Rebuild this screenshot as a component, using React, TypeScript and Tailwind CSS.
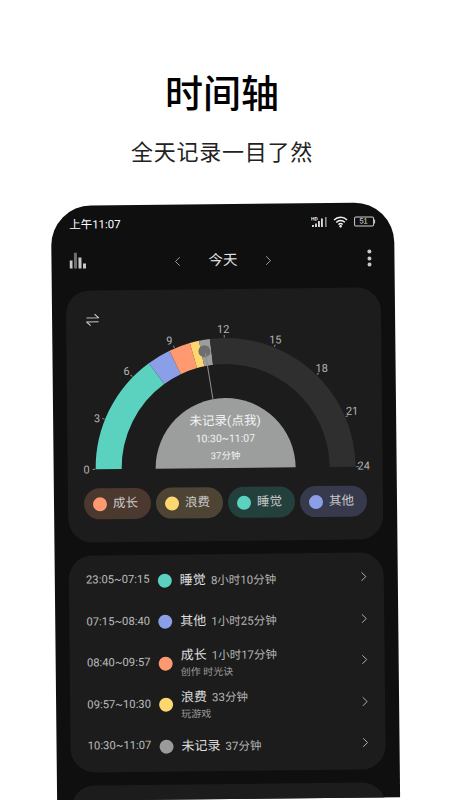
import { ChevronLeft, ChevronRight } from "lucide-react";

const cx = 158;
const cy = 179;

function point(hour: number, r: number) {
  const a = Math.PI - (hour / 24) * Math.PI;
  return [cx + r * Math.cos(a), cy - r * Math.sin(a)];
}

function arc(from: number, to: number) {
  const R = 130;
  const r = 104;
  const [x1, y1] = point(from, R);
  const [x2, y2] = point(to, R);
  const [x3, y3] = point(to, r);
  const [x4, y4] = point(from, r);
  return `M${x1} ${y1}A${R} ${R} 0 0 1 ${x2} ${y2}L${x3} ${y3}A${r} ${r} 0 0 0 ${x4} ${y4}Z`;
}

const segments = [
  { from: 0, to: 7.25, color: "#5bd2c0" },
  { from: 7.25, to: 8.67, color: "#8b9fe8" },
  { from: 8.67, to: 9.95, color: "#ff9a70" },
  { from: 9.95, to: 10.5, color: "#ffd771" },
  { from: 10.5, to: 11.15, color: "#9c9e9d" },
  { from: 11.15, to: 24, color: "#2f2f2f" },
];

const labels = [
  { h: 0, t: "0", x: 19, y: 183 },
  { h: 3, t: "3", x: 30, y: 132 },
  { h: 6, t: "6", x: 60, y: 85 },
  { h: 9, t: "9", x: 103, y: 55 },
  { h: 12, t: "12", x: 157, y: 44 },
  { h: 15, t: "15", x: 209, y: 55 },
  { h: 18, t: "18", x: 255, y: 84 },
  { h: 21, t: "21", x: 285, y: 127 },
  { h: 24, t: "24", x: 296, y: 182 },
];

const pills = [
  { name: "成长", dot: "bg-[#ff9a70]", bg: "bg-[#4b382f]" },
  { name: "浪费", dot: "bg-[#ffd771]", bg: "bg-[#4e4434]" },
  { name: "睡觉", dot: "bg-[#5bd2c0]", bg: "bg-[#24403c]" },
  { name: "其他", dot: "bg-[#8b9fe8]", bg: "bg-[#363a4c]" },
];

const rows = [
  { time: "23:05~07:15", dot: "bg-[#5bd2c0]", name: "睡觉", len: "8小时10分钟", sub: "" },
  { time: "07:15~08:40", dot: "bg-[#8b9fe8]", name: "其他", len: "1小时25分钟", sub: "" },
  { time: "08:40~09:57", dot: "bg-[#ff9a70]", name: "成长", len: "1小时17分钟", sub: "创作 时光诀" },
  { time: "09:57~10:30", dot: "bg-[#ffd771]", name: "浪费", len: "33分钟", sub: "玩游戏" },
  { time: "10:30~11:07", dot: "bg-[#9a9a9a]", name: "未记录", len: "37分钟", sub: "" },
];

function Gauge() {
  return (
    <svg width="315" height="190" viewBox="0 0 315 190" className="block">
      {segments.map((s) => (
        <path key={s.from} d={arc(s.from, s.to)} fill={s.color} />
      ))}
      {labels.map((l) => {
        const [x1, y1] = point(l.h, 130.5);
        const [x2, y2] = point(l.h, 133);
        return (
          <g key={l.t}>
            <line x1={x1} y1={y1} x2={x2} y2={y2} stroke="#8a8a8a" strokeWidth="1" />
            <text x={l.x} y={l.y} textAnchor="middle" fontSize="11" fill="#b5b5b5">
              {l.t}
            </text>
          </g>
        );
      })}
      <circle cx="138" cy="62" r="6" fill="#6e6e6e" />
      <line x1="139" y1="64" x2="146" y2="110" stroke="#8e8e8e" strokeWidth="1" />
      <path d="M88 179A70 70 0 0 1 228 179Z" fill="#9c9e9d" />
      <text x="158" y="136" textAnchor="middle" fontSize="12.5" fill="#f2f2f2">
        未记录(点我)
      </text>
      <text x="158" y="153" textAnchor="middle" fontSize="10.5" fill="#f2f2f2">
        10:30~11:07
      </text>
      <text x="158" y="170" textAnchor="middle" fontSize="9.5" fill="#f2f2f2">
        37分钟
      </text>
    </svg>
  );
}

export default function App() {
  return (
    <div className="w-[450px] h-[800px] overflow-hidden bg-white text-black font-['Roboto','Noto_Sans_CJK_SC',sans-serif]">
      <div className="pr-[6px] text-center">
        <h1 className="pt-[66px] text-[38px] leading-[56px] font-medium">时间轴</h1>
        <p className="mt-[14px] text-[22px] leading-[34px] tracking-[0.75px] text-[#222]">全天记录一目了然</p>
      </div>

      <div className="mt-[34px] ml-[54px] w-[343px] h-[595px] overflow-hidden rounded-t-[40px] bg-[#0f0f0f] -rotate-[0.6deg]">
        {/* status bar */}
        <div className="flex items-center justify-between h-[22px] mt-[8px] pl-[18px] pr-[19px] text-white">
          <span className="text-[11.5px] leading-[22px]">上午11:07</span>
          <div className="flex items-center gap-[5px]">
            <svg width="17" height="12" viewBox="0 0 17 12" fill="#f0f0f0">
              <text x="0" y="4.5" fontSize="5" fontWeight="700">HD</text>
              <rect x="1" y="9" width="1.7" height="2" />
              <rect x="4" y="7.5" width="1.7" height="3.5" />
              <rect x="7" y="5" width="1.7" height="6" />
              <rect x="10" y="2.5" width="1.7" height="8.5" />
              <rect x="14" y="1" width="1.5" height="10" fill="#9a9a9a" />
            </svg>
            <svg width="15" height="12" viewBox="0 0 15 12" fill="none" stroke="#f0f0f0" strokeWidth="1.5">
              <path d="M1 4.2a9.2 9.2 0 0 1 13 0" />
              <path d="M3.2 6.6a6 6 0 0 1 8.6 0" />
              <path d="M5.4 8.8a3 3 0 0 1 4.2 0" />
              <circle cx="7.5" cy="10.6" r="0.6" fill="#f0f0f0" />
            </svg>
            <div className="flex items-center ml-[1px]">
              <div className="w-[20px] h-[10px] rounded-[2px] border border-[#cfcfcf] flex items-center justify-center text-[7.5px] leading-none text-[#e6e6e6] font-['Liberation_Sans',sans-serif]">
                51
              </div>
              <div className="w-[1.5px] h-[4px] bg-[#cfcfcf]" />
            </div>
          </div>
        </div>

        {/* header */}
        <div className="relative flex items-center justify-center h-[24px] mt-[15px]">
          <svg className="absolute left-[18px] top-[2px]" width="17" height="17" viewBox="0 0 17 17">
            <rect x="0" y="8" width="3" height="8" fill="#c8c8c8" />
            <rect x="4.5" y="0" width="3" height="16" fill="#6f6f6f" />
            <rect x="9" y="5" width="3" height="11" fill="#c8c8c8" />
            <rect x="13.5" y="11" width="3" height="5" fill="#c8c8c8" />
          </svg>
          <div className="flex items-center gap-[23px] text-[#bdbdbd]">
            <ChevronLeft size={16} strokeWidth={1.2} />
            <span className="text-[14.5px] leading-[24px] text-[#e2e2e2]">今天</span>
            <ChevronRight size={16} strokeWidth={1.2} />
          </div>
          <div className="absolute right-[23px] top-[2px] flex flex-col gap-[2.5px]">
            <div className="w-[4px] h-[4px] rounded-full bg-[#c9c9c9]" />
            <div className="w-[4px] h-[4px] rounded-full bg-[#c9c9c9]" />
            <div className="w-[4px] h-[4px] rounded-full bg-[#c9c9c9]" />
          </div>
        </div>

        {/* gauge card */}
        <div className="relative mt-[16px] ml-[14px] mr-[14px] h-[252px] rounded-[24px] bg-[#1c1c1c]">
          <svg className="absolute left-[20px] top-[23px]" width="13" height="13" viewBox="0 0 13 13" fill="none" stroke="#c8c8c8" strokeWidth="1.1">
            <path d="M0.5 4.5h12L8.5 0.8" />
            <path d="M12.5 8.5H0.5l4 3.7" />
          </svg>
          <Gauge />
          <div className="flex gap-[5px] mt-[8px] pl-[16px]">
            {pills.map((p) => (
              <div key={p.name} className={`flex items-center gap-[6px] w-[67px] h-[31px] pl-[9px] rounded-full ${p.bg}`}>
                <div className={`w-[14px] h-[14px] rounded-full ${p.dot}`} />
                <span className="text-[12.5px] leading-none text-[#c9c9c9]">{p.name}</span>
              </div>
            ))}
          </div>
        </div>

        {/* record list */}
        <div className="mt-[13px] ml-[14px] mr-[14px] h-[217px] rounded-[24px] bg-[#1c1c1c] pt-[5px] flex flex-col">
          {rows.map((r) => (
            <div key={r.time} className="flex items-center h-[41.5px]">
              <span className="w-[98px] text-center text-[11.25px] text-[#bcbcbc]">{r.time}</span>
              <div className={`w-[14px] h-[14px] rounded-full -ml-[9px] ${r.dot}`} />
              <div className="ml-[8px] flex-1">
                <div className="flex items-baseline gap-[5px] leading-[18px]">
                  <span className="text-[13px] text-[#dedede]">{r.name}</span>
                  <span className="text-[11.5px] text-[#b5b5b5]">{r.len}</span>
                </div>
                {r.sub && <div className="text-[10px] leading-[15px] text-[#9a9a9a]">{r.sub}</div>}
              </div>
              <ChevronRight className="mr-[12px] mb-[3px] text-[#c4c4c4]" size={16} strokeWidth={1.3} />
            </div>
          ))}
        </div>

        <div className="mt-[13px] ml-[14px] mr-[14px] h-[60px] rounded-[24px] bg-[#1c1c1c]" />
      </div>
    </div>
  );
}
